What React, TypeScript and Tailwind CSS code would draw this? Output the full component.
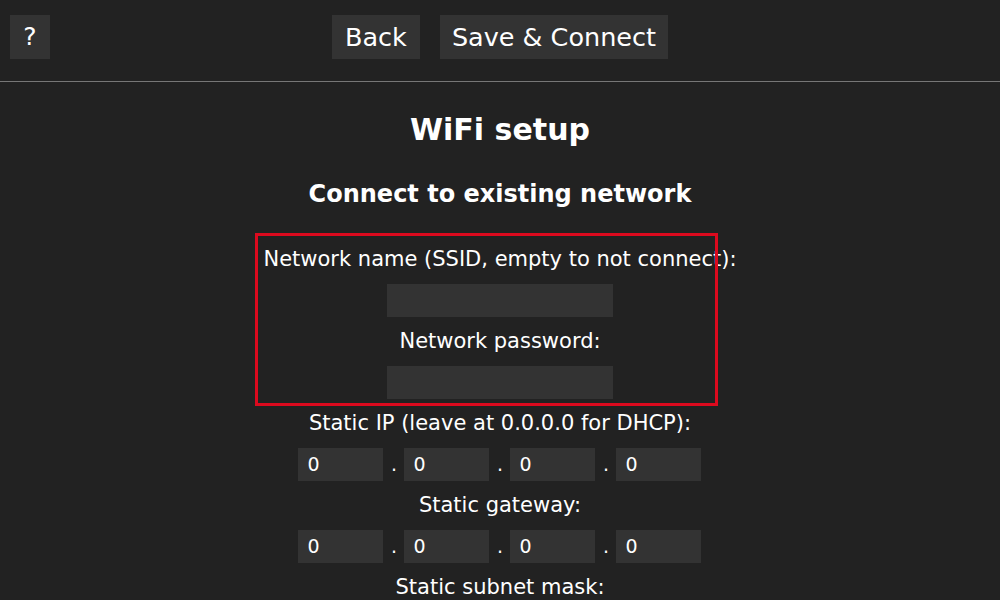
import React from 'react';

const font = { fontFamily: '"DejaVu Sans", Verdana, sans-serif' };

const Label = ({ text }: { text: string }) => (
  <div className="h-6 leading-6 text-[21px]">{text}</div>
);

const TextField = ({ label }: { label: string }) => (
  <div className="flex flex-col items-center">
    <Label text={label} />
    <div className="mt-[13px] mb-[12px] h-[33px] w-[226px] bg-[#333]" />
  </div>
);

const IpField = ({ label }: { label: string }) => (
  <div className="flex flex-col items-center">
    <Label text={label} />
    <div className="mt-[13px] mb-[12px] flex items-center">
      {[0, 1, 2, 3].map((i) => (
        <React.Fragment key={i}>
          {i > 0 && <span className="w-[21px] text-center text-[19px]">.</span>}
          <div className="h-[33px] w-[85px] bg-[#333] pl-[9px] text-[19px] leading-[33px]">0</div>
        </React.Fragment>
      ))}
    </div>
  </div>
);

export default function App() {
  return (
    <div className="h-screen overflow-hidden bg-[#222] text-white" style={font}>
      <div className="grid grid-cols-[1fr_auto_1fr] items-start pt-[15px]">
        <div className="pl-[10px]">
          <button className="h-[44px] w-[40px] bg-[#333] text-[25px]">?</button>
        </div>
        <div className="flex gap-[20px]">
          <button className="h-[44px] bg-[#333] px-[13px] text-[25.5px]">Back</button>
          <button className="h-[44px] bg-[#333] px-[12px] text-[25.5px]">Save &amp; Connect</button>
        </div>
        <div />
      </div>
      <div className="mt-[22px] h-[1px] bg-[#777]" />

      <div className="flex flex-col items-center">
        <h1 className="mt-[30px] text-[30px] font-bold leading-[36px]">WiFi setup</h1>
        <h2 className="mt-[31px] text-[24px] font-bold leading-[30px]">Connect to existing network</h2>

        <div className="relative mt-[38px]">
          <TextField label="Network name (SSID, empty to not connect):" />
          <TextField label="Network password:" />
          <IpField label="Static IP (leave at 0.0.0.0 for DHCP):" />
          <IpField label="Static gateway:" />
          <div className="flex justify-center">
            <Label text="Static subnet mask:" />
          </div>
          <div className="pointer-events-none absolute left-[-8px] top-[-14px] h-[173px] w-[463px] border-[3px] border-[#dc0a1e]" />
        </div>
      </div>
    </div>
  );
}
